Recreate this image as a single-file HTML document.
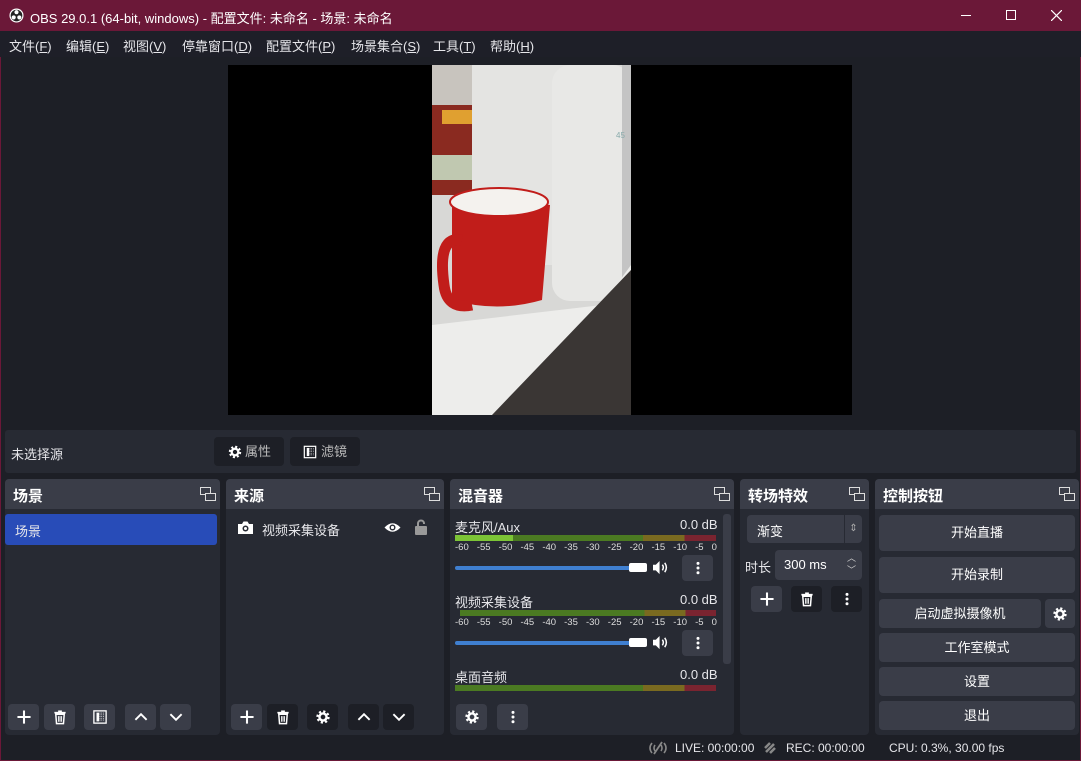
<!DOCTYPE html>
<html><head><meta charset="utf-8"><style>
*{box-sizing:border-box;margin:0;padding:0}
body{width:1081px;height:761px;overflow:hidden;background:#1d1f26;font-family:"Liberation Sans","Noto Sans CJK SC",sans-serif;color:#e6e6ea;font-size:13px;position:relative}
.a{position:absolute}
.title{left:0;top:0;width:1081px;height:31px;background:#6b1838;color:#fff;font-size:13px}
.menu{left:0;top:31px;width:1081px;height:26px;background:#1e1f28;font-size:13px}
.menu span{position:absolute;top:5px}
.dock{background:#272a33;border-radius:4px}
.hd{position:absolute;left:0;top:0;right:0;height:30px;background:#3a3d48;border-radius:4px 4px 0 0;font-weight:bold;font-size:15px;padding:6px 8px;color:#fff}
.fl{position:absolute;right:4px;top:8px;width:16px;height:14px}
.btn{position:absolute;background:#3a3d48;border-radius:4px;text-align:center;color:#fff}
.btn svg{position:absolute;left:50%;top:50%;transform:translate(-50%,-50%)}
.dk{background:#1d1f26}
.cb{position:absolute;left:4px;width:196px;height:36px;background:#3a3d48;border-radius:4px;text-align:center;line-height:36px;font-size:13px;color:#fff}
.meter{position:absolute;height:6px;background:linear-gradient(90deg,#4b7a22 0,#4b7a22 72%,#7a6a20 72%,#7a6a20 88%,#7a2430 88%)}
.scale{position:absolute;font-size:9.5px;color:#ddd;display:flex;justify-content:space-between;width:262px}
.slider{position:absolute;height:4px;background:#3f7fd0;border-radius:2px}
.knob{position:absolute;width:18px;height:9px;background:#fff;border-radius:2px}
</style></head><body>
<svg width="0" height="0" style="position:absolute">
<defs>
<symbol id="gear" viewBox="0 0 16 16"><circle cx="8" cy="8" r="5.6" fill="none" stroke="#fff" stroke-width="3" stroke-dasharray="2.2 2.2"/><circle cx="8" cy="8" r="3.8" fill="none" stroke="#fff" stroke-width="2.6"/></symbol>
<symbol id="trash" viewBox="0 0 16 16"><rect x="2" y="2.5" width="12" height="1.8" fill="#fff"/><rect x="6" y="1" width="4" height="2" fill="#fff"/><path d="M3.5 5 h9 l-0.8 10 h-7.4z" fill="none" stroke="#fff" stroke-width="1.6"/><path d="M6.5 7v6M8 7v6M9.5 7v6" stroke="#fff" stroke-width="1"/></symbol>
<symbol id="up" viewBox="0 0 16 16"><path d="M2 11 L8 5 L14 11" fill="none" stroke="#fff" stroke-width="2"/></symbol>
<symbol id="down" viewBox="0 0 16 16"><path d="M2 5 L8 11 L14 5" fill="none" stroke="#fff" stroke-width="2"/></symbol>
<symbol id="plus" viewBox="0 0 16 16"><path d="M8 1v14M1 8h14" stroke="#fff" stroke-width="2.2"/></symbol>
<symbol id="filt" viewBox="0 0 16 16"><rect x="1" y="1" width="14" height="14" fill="none" stroke="#fff" stroke-width="1.5"/><rect x="4" y="3" width="3" height="10" fill="#fff"/><path d="M8 3v10M10 3v10M12 3v10" stroke="#fff" stroke-width=".8" stroke-dasharray="1 1"/></symbol>
<symbol id="dots" viewBox="0 0 16 16"><circle cx="8" cy="3" r="1.6" fill="#fff"/><circle cx="8" cy="8" r="1.6" fill="#fff"/><circle cx="8" cy="13" r="1.6" fill="#fff"/></symbol>
<symbol id="spk" viewBox="0 0 18 16"><path d="M1 5h3l4-4v14l-4-4H1z" fill="#fff"/><path d="M11 5q2 3 0 6M13.5 3q3.5 5 0 10" fill="none" stroke="#fff" stroke-width="1.6"/></symbol>
<symbol id="fl" viewBox="0 0 16 14"><rect x="0.5" y="0.5" width="10" height="7" fill="none" stroke="#ddd"/><rect x="5.5" y="6.5" width="10" height="7" fill="#3a3d48" stroke="#ddd"/></symbol>
</defs></svg>
<div class="a" style="left:0;top:0;width:1081px;height:761px;border:1px solid #6b1838"></div>
<div class="a title">
<svg class="a" style="left:9px;top:8px" width="15" height="15" viewBox="0 0 16 16"><circle cx="8" cy="8" r="7.5" fill="#fff"/><circle cx="8" cy="8" r="6.2" fill="#222"/><circle cx="8" cy="4.5" r="2.2" fill="#fff"/><circle cx="5" cy="10" r="2.2" fill="#fff"/><circle cx="11" cy="10" r="2.2" fill="#fff"/></svg>
<span class="a" style="left:30px;top:8px">OBS 29.0.1 (64-bit, windows) - 配置文件: 未命名 - 场景: 未命名</span>
<span class="a" style="left:961px;top:15px;width:10px;height:1px;background:#fff"></span>
<span class="a" style="left:1006px;top:10px;width:10px;height:10px;border:1px solid #fff"></span>
<svg class="a" style="left:1051px;top:10px" width="11" height="11"><path d="M0 0L11 11M11 0L0 11" stroke="#fff" stroke-width="1.2"/></svg>
</div>
<div class="a menu">
<span style="left:9px">文件(<u>F</u>)</span><span style="left:66px">编辑(<u>E</u>)</span><span style="left:123px">视图(<u>V</u>)</span><span style="left:182px">停靠窗口(<u>D</u>)</span><span style="left:266px">配置文件(<u>P</u>)</span><span style="left:351px">场景集合(<u>S</u>)</span><span style="left:433px">工具(<u>T</u>)</span><span style="left:490px">帮助(<u>H</u>)</span>
</div>
<div class="a" style="left:228px;top:65px;width:624px;height:350px;background:#000"></div>
<svg class="a" style="left:432px;top:65px" width="199" height="350" viewBox="0 0 199 350">
<rect width="199" height="350" fill="#d8d8d6"/>
<rect x="0" y="0" width="40" height="60" fill="#c8c4be"/>
<rect x="0" y="40" width="75" height="90" fill="#8a2a20"/>
<rect x="10" y="45" width="50" height="14" fill="#e0a030"/>
<rect x="0" y="90" width="40" height="25" fill="#c0c8b0"/>
<rect x="40" y="0" width="100" height="200" fill="#e4e4e2"/>
<rect x="120" y="0" width="79" height="236" rx="18" fill="#e8e8e6"/>
<rect x="190" y="0" width="9" height="236" fill="#c4c4c4"/>
<polygon points="0,350 60,350 199,210 199,200 170,240 0,260" fill="#ededeb"/>
<polygon points="60,350 199,350 199,205" fill="#3a3634"/>
<path d="M20 135 L20 235 Q65 248 110 235 L118 140 Z" fill="#c11d1a"/>
<ellipse cx="67" cy="137" rx="49" ry="14" fill="#f4f2ee" stroke="#c11d1a" stroke-width="2"/>
<path d="M30 175 Q5 170 12 220 Q15 245 40 240" fill="none" stroke="#c11d1a" stroke-width="11"/>
<text x="184" y="73" font-size="8" fill="#8aa" font-family="Liberation Sans">45</text>
</svg>
<div class="a" style="left:5px;top:430px;width:1071px;height:43px;background:#272a33;border-radius:3px"></div>
<span class="a" style="left:11px;top:444px">未选择源</span>
<div class="btn dk" style="left:214px;top:437px;width:70px;height:29px;line-height:29px;color:#bbb;padding-left:18px">属性<svg width="14" height="14" style="left:21px"><use href="#gear"/></svg></div>
<div class="btn dk" style="left:290px;top:437px;width:70px;height:29px;line-height:29px;color:#bbb;padding-left:18px">滤镜<svg width="13" height="13" style="left:20px"><use href="#filt"/></svg></div>

<!-- scenes -->
<div class="a dock" style="left:5px;top:479px;width:215px;height:256px"><div class="hd">场景</div>
<svg class="fl"><use href="#fl"/></svg>
<div class="a" style="left:0;top:35px;width:212px;height:31px;background:#284cb8;border-radius:3px;padding:7px 10px">场景</div>
<div class="btn" style="left:3px;top:225px;width:31px;height:26px"><svg width="15" height="15"><use href="#plus"/></svg></div>
<div class="btn" style="left:39px;top:225px;width:31px;height:26px"><svg width="15" height="15"><use href="#trash"/></svg></div>
<div class="btn" style="left:79px;top:225px;width:31px;height:26px"><svg width="14" height="14"><use href="#filt"/></svg></div>
<div class="btn" style="left:120px;top:225px;width:31px;height:26px"><svg width="15" height="15"><use href="#up"/></svg></div>
<div class="btn" style="left:155px;top:225px;width:31px;height:26px"><svg width="15" height="15"><use href="#down"/></svg></div>
</div>
<!-- sources -->
<div class="a dock" style="left:226px;top:479px;width:218px;height:256px"><div class="hd">来源</div>
<svg class="fl"><use href="#fl"/></svg>
<svg class="a" style="left:12px;top:42px" width="15" height="13" viewBox="0 0 15 13"><path d="M0 3h4l1.5-2.5h4L11 3h4v10H0z" fill="#fff"/><circle cx="7.5" cy="7.5" r="3" fill="#272a33"/><circle cx="7.5" cy="7.5" r="1.5" fill="#fff"/></svg>
<span class="a" style="left:36px;top:41px">视频采集设备</span>
<svg class="a" style="left:158px;top:43px" width="17" height="11" viewBox="0 0 17 11"><path d="M0.5 5.5Q8.5 -3 16.5 5.5Q8.5 14 0.5 5.5z" fill="#fff"/><circle cx="8.5" cy="5.5" r="3" fill="#272a33"/><circle cx="8.5" cy="5.5" r="1.6" fill="#fff"/></svg>
<svg class="a" style="left:189px;top:40px" width="12" height="16" viewBox="0 0 12 16"><path d="M3 7V4.5a3 3 0 0 1 6 0V5" fill="none" stroke="#999" stroke-width="2"/><rect x="0" y="7" width="12" height="9" rx="1" fill="#999"/></svg>
<div class="btn" style="left:5px;top:225px;width:31px;height:26px"><svg width="15" height="15"><use href="#plus"/></svg></div>
<div class="btn dk" style="left:41px;top:225px;width:31px;height:26px"><svg width="15" height="15"><use href="#trash"/></svg></div>
<div class="btn dk" style="left:81px;top:225px;width:31px;height:26px"><svg width="15" height="15"><use href="#gear"/></svg></div>
<div class="btn dk" style="left:122px;top:225px;width:31px;height:26px"><svg width="15" height="15"><use href="#up"/></svg></div>
<div class="btn dk" style="left:157px;top:225px;width:31px;height:26px"><svg width="15" height="15"><use href="#down"/></svg></div>
</div>
<!-- mixer -->
<div class="a dock" style="left:450px;top:479px;width:284px;height:256px"><div class="hd">混音器</div>
<svg class="fl"><use href="#fl"/></svg>
<div class="a" style="left:273px;top:35px;width:8px;height:150px;background:#3a3d48;border-radius:3px"></div>
<span class="a" style="left:5px;top:38px">麦克风/Aux</span><span class="a" style="left:230px;top:38px">0.0 dB</span>
<div class="meter" style="left:5px;top:56px;width:261px"></div>
<div class="a" style="left:5px;top:56px;width:58px;height:6px;background:#7cc436"></div>
<div class="scale" style="left:5px;top:63px"><span>-60</span><span>-55</span><span>-50</span><span>-45</span><span>-40</span><span>-35</span><span>-30</span><span>-25</span><span>-20</span><span>-15</span><span>-10</span><span>-5</span><span>0</span></div>
<div class="slider" style="left:5px;top:87px;width:180px"></div><div class="knob" style="left:179px;top:84px"></div>
<svg class="a" style="left:202px;top:81px" width="17" height="15"><use href="#spk"/></svg>
<div class="btn" style="left:232px;top:76px;width:31px;height:26px"><svg width="15" height="15"><use href="#dots"/></svg></div>
<span class="a" style="left:5px;top:113px">视频采集设备</span><span class="a" style="left:230px;top:113px">0.0 dB</span>
<div class="meter" style="left:10px;top:131px;width:256px"></div>
<div class="scale" style="left:5px;top:138px"><span>-60</span><span>-55</span><span>-50</span><span>-45</span><span>-40</span><span>-35</span><span>-30</span><span>-25</span><span>-20</span><span>-15</span><span>-10</span><span>-5</span><span>0</span></div>
<div class="slider" style="left:5px;top:162px;width:180px"></div><div class="knob" style="left:179px;top:159px"></div>
<svg class="a" style="left:202px;top:156px" width="17" height="15"><use href="#spk"/></svg>
<div class="btn" style="left:232px;top:151px;width:31px;height:26px"><svg width="15" height="15"><use href="#dots"/></svg></div>
<span class="a" style="left:5px;top:188px">桌面音频</span><span class="a" style="left:230px;top:188px">0.0 dB</span>
<div class="meter" style="left:5px;top:206px;width:261px"></div>
<div class="btn" style="left:6px;top:225px;width:31px;height:26px"><svg width="15" height="15"><use href="#gear"/></svg></div>
<div class="btn" style="left:47px;top:225px;width:31px;height:26px"><svg width="15" height="15"><use href="#dots"/></svg></div>
</div>
<!-- transitions -->
<div class="a dock" style="left:740px;top:479px;width:129px;height:256px"><div class="hd">转场特效</div>
<svg class="fl"><use href="#fl"/></svg>
<div class="btn" style="left:7px;top:36px;width:115px;height:28px;text-align:left;padding:6px 10px">渐变<span style="position:absolute;right:0;top:0;width:18px;height:28px;border-left:1px solid #272a33;font-size:10px;color:#aaa;line-height:28px;text-align:center">⇕</span></div>
<span class="a" style="left:5px;top:78px">时长</span>
<div class="btn" style="left:35px;top:71px;width:87px;height:30px;text-align:left;padding:7px 9px">300 ms<span style="position:absolute;right:6px;top:2px;font-size:9px;color:#ccc;line-height:12px">︿<br>﹀</span></div>
<div class="btn" style="left:11px;top:107px;width:31px;height:26px"><svg width="15" height="15"><use href="#plus"/></svg></div>
<div class="btn dk" style="left:51px;top:107px;width:31px;height:26px"><svg width="15" height="15"><use href="#trash"/></svg></div>
<div class="btn dk" style="left:91px;top:107px;width:31px;height:26px"><svg width="15" height="15"><use href="#dots"/></svg></div>
</div>
<!-- controls -->
<div class="a dock" style="left:875px;top:479px;width:204px;height:256px"><div class="hd">控制按钮</div>
<svg class="fl"><use href="#fl"/></svg>
<div class="cb" style="top:36px">开始直播</div>
<div class="cb" style="top:78px">开始录制</div>
<div class="cb" style="top:120px;width:162px;height:29px;line-height:29px">启动虚拟摄像机</div>
<div class="btn" style="left:170px;top:120px;width:30px;height:29px"><svg width="15" height="15"><use href="#gear"/></svg></div>
<div class="cb" style="top:154px;height:29px;line-height:29px">工作室模式</div>
<div class="cb" style="top:188px;height:29px;line-height:29px">设置</div>
<div class="cb" style="top:222px;height:29px;line-height:29px">退出</div>
</div>
<!-- status -->
<svg class="a" style="left:648px;top:741px" width="20" height="14" viewBox="0 0 20 14"><path d="M4 2Q0 7 4 12M16 2Q20 7 16 12M7 4Q5 7 7 10M13 4Q15 7 13 10" fill="none" stroke="#888" stroke-width="1.6"/><path d="M6 13L14 1" stroke="#888" stroke-width="1.8"/></svg>
<span class="a" style="left:675px;top:741px;font-size:12px">LIVE: 00:00:00</span>
<svg class="a" style="left:764px;top:742px" width="12" height="12"><path d="M2 10L10 2M1 6L6 1M6 11L11 6" stroke="#888" stroke-width="2.5"/></svg>
<span class="a" style="left:786px;top:741px;font-size:12px">REC: 00:00:00</span>
<span class="a" style="left:889px;top:741px;font-size:12px">CPU: 0.3%, 30.00 fps</span>
</body></html>
